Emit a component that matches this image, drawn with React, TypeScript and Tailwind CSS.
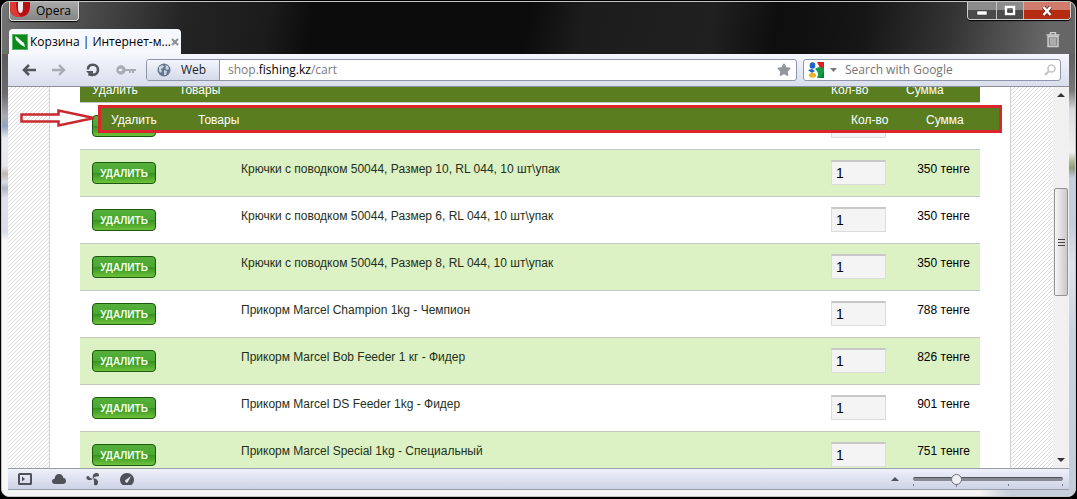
import React from "react";
import { Star } from "lucide-react";

interface CartItem {
  id: number;
  name: string;
  price: number;
}

const items: CartItem[] = [
  { id: 1, name: "", price: 0 },
  { id: 2, name: "Крючки с поводком 50044, Размер 10, RL 044, 10 шт\\упак", price: 350 },
  { id: 3, name: "Крючки с поводком 50044, Размер 6, RL 044, 10 шт\\упак", price: 350 },
  { id: 4, name: "Крючки с поводком 50044, Размер 8, RL 044, 10 шт\\упак", price: 350 },
  { id: 5, name: "Прикорм Marcel Champion 1kg - Чемпион", price: 788 },
  { id: 6, name: "Прикорм Marcel Bob Feeder 1 кг - Фидер", price: 826 },
  { id: 7, name: "Прикорм Marcel DS Feeder 1kg - Фидер", price: 901 },
  { id: 8, name: "Прикорм Marcel Special 1kg - Специальный", price: 751 },
];

const hatch =
  "bg-[linear-gradient(135deg,#fff_40%,#dcdcdc_40%,#dcdcdc_50%,#fff_50%,#fff_90%,#dcdcdc_90%)] bg-[length:4px_4px]";

const OperaLogo = () => (
  <svg className="w-5 h-4" viewBox="0 0 20 16">
    <path d="M0 0h20v4c0 7-4 11-10 11C5 15 1 13 0 8z" fill="#b90f14" />
    <path d="M0 0h6c0 7 1 13 6 14.500C5 16 1 13 0 8z" fill="#de3a35" />
    <path d="M8 0h5v6c0 3-1 5-2.500 5S8 9 8 6z" fill="#eceaea" />
  </svg>
);

const TitleBar = () => (
  <header className="flex h-[52px] justify-between pl-[7px] bg-[linear-gradient(100deg,#747474_0%,#4c4c4c_8%,#242424_17%,#1b1b1b_25%,#0c0c0c_29%,#0c0c0c_49%,#1c1c1c_54%,#202020_66%,#0e0e0e_72%,#161616_80%,#333_88%,#666_97%)]">
    <div className="flex flex-col justify-between">
      <button className="flex items-start h-[19px] w-[70px] rounded-b-[4px] border border-t-0 border-[#ddd] bg-linear-to-b from-[#a9a9a9] to-[#858585] shadow-[0_1px_1px_#000] text-[12px] leading-[18px] text-black">
        <OperaLogo />
        <span className="pl-1.5">Opera</span>
      </button>
      <div className="flex items-center h-[25px] w-[172px] rounded-t-[4px] bg-[#f7f8fd] px-[3px]">
        <svg className="w-4 h-4 shrink-0" viewBox="0 0 16 16">
          <rect width="16" height="16" fill="#0c8a1c" />
          <rect x=".5" y=".5" width="15" height="15" fill="none" stroke="#5cb567" />
          <path d="M3 2.500l2 .5 5 4.500 2 1.500 1 4-3-1.500-2-1.500L4 6z" fill="#fff" />
        </svg>
        <span className="pl-0.5 text-[12px] leading-4 text-black whitespace-nowrap">Корзина | Интернет-м...</span>
        <button aria-label="Close tab" className="ml-auto mr-1 text-[#8d8f93]">
          <svg className="w-2 h-2" viewBox="0 0 8 8" stroke="currentColor" strokeWidth="2">
            <path d="M1 1l6 6M7 1L1 7" />
          </svg>
        </button>
      </div>
    </div>
    <div className="flex flex-col items-end pr-1">
      <div className="flex h-[18px] rounded-b-[4px] border border-t-0 border-[#d0d0d0] overflow-hidden shadow-[0_1px_1px_#000]">
        <button aria-label="Minimize" className="flex w-7 items-center justify-center bg-linear-to-b from-[#8b8b8b] from-50% to-[#4a4a4a] to-50%">
          <svg className="w-3 h-3" viewBox="0 0 12 12"><rect x="1" y="6" width="10" height="4" fill="#fff" stroke="#444" strokeWidth=".6" /></svg>
        </button>
        <button aria-label="Maximize" className="flex w-[27px] items-center justify-center border-l border-[#c4c4c4] bg-linear-to-b from-[#8b8b8b] from-50% to-[#4a4a4a] to-50%">
          <svg className="w-3 h-3" viewBox="0 0 12 12" fill="none"><rect x="2" y="2" width="8" height="7" stroke="#fff" strokeWidth="2.400" /><rect x="4" y="4" width="4" height="3" stroke="#444" strokeWidth=".8" /></svg>
        </button>
        <button aria-label="Close" className="flex w-[47px] items-center justify-center border-l border-[#d9b1a8] bg-linear-to-b from-[#d07b6b] from-50% to-[#b52c12] to-50%">
          <svg className="w-3 h-3" viewBox="0 0 12 12"><path d="M2.500 2l7 8M9.500 2l-7 8" stroke="#5a2018" strokeWidth="4" /><path d="M2.500 2l7 8M9.500 2l-7 8" stroke="#fff" strokeWidth="2.600" /></svg>
        </button>
      </div>
      <button aria-label="Closed tabs" className="mt-3 mr-[11px]">
        <svg className="w-3.5 h-4" viewBox="0 0 14 16" fill="none" stroke="#cfcfcf">
          <path d="M2 4.500h10v10H2z" fill="#8a8a8a" strokeWidth="1.400" />
          <path d="M.5 3h13M4.500 2.500v-2h5v2" strokeWidth="1.400" />
          <path d="M5 6v7M7 6v7M9 6v7" strokeWidth="1" />
        </svg>
      </button>
    </div>
  </header>
);

const Toolbar = () => (
  <div className="flex shrink-0 items-center h-[33px] pl-3.5 pr-2 border-b border-[#8d919e] bg-linear-to-b from-[#f5f7fd] to-[#d9deec]">
    <div className="flex items-center gap-4 text-[#53565c]">
      <button aria-label="Back">
        <svg className="w-3.5 h-3" viewBox="0 0 14 12" fill="none" stroke="currentColor" strokeWidth="2.600"><path d="M7 1L2 6l5 5M2 6h12" /></svg>
      </button>
      <button aria-label="Forward" className="text-[#a9acb3]">
        <svg className="w-3.5 h-3" viewBox="0 0 14 12" fill="none" stroke="currentColor" strokeWidth="2.400"><path d="M7 1l5 5-5 5M12 6H0" /></svg>
      </button>
      <button aria-label="Reload" className="ml-1">
        <svg className="w-3.5 h-3.5" viewBox="0 0 14 14" fill="none" stroke="currentColor" strokeWidth="2.600"><path d="M2 6.500V6C2 3.300 4.200 1.800 7 1.800s5 2.200 5 5-2 5-5 5H6" /><path d="M2 12.500l.5-2L0 8h7v5.500z" fill="currentColor" stroke="none" /></svg>
      </button>
      <button aria-label="Wand" className="text-[#a9acb3]">
        <svg className="w-5 h-2.5" viewBox="0 0 20 10" fill="none" stroke="currentColor"><path d="M8 5h12M14 5v3M17 5v3" strokeWidth="2" /><circle cx="5" cy="5" r="3" strokeWidth="3.500" /><circle cx="4" cy="5" r="1.300" fill="#eceff8" stroke="none" /></svg>
      </button>
    </div>
    <div className="flex flex-1 ml-2.5 h-[22px] items-stretch rounded-[3px] border border-[#8f95a8] bg-white overflow-hidden">
      <button className="flex items-center w-[73px] shrink-0 pl-2.5 border-r border-[#8f95a8] bg-linear-to-b from-[#f3f5fb] to-[#d4daea] text-[12px] text-[#222]">
        <svg className="w-3.5 h-3.5" viewBox="0 0 14 14">
          <circle cx="7" cy="7" r="6.500" fill="#66758c" />
          <path d="M2 4l3-2 2 1-1 2-2 1 1 2-1 2-2-2zM8 2l3 1 1 3-2 1-2-2 1-1zM7 7l3 1-1 4-2 0z" fill="#c8d3e2" />
        </svg>
        <span className="pl-2.5">Web</span>
      </button>
      <label className="relative flex flex-1 items-center pl-2 text-[12px] text-[#7c7c7c]">
        <span>shop.<span className="text-black">fishing.kz</span>/cart</span>
        <input type="text" aria-label="Address" className="absolute inset-0 bg-transparent outline-none pl-2" />
      </label>
      <button aria-label="Bookmark" className="px-[5px] text-[#93969c]">
        <Star className="w-3.5 h-3.5" fill="currentColor" />
      </button>
    </div>
    <div className="flex w-[258px] ml-1.5 h-[22px] items-center rounded-[3px] border border-[#8f95a8] bg-white px-1">
      <button aria-label="Search engine" className="flex items-center gap-1.5">
        <svg className="w-4 h-4" viewBox="0 0 16 16">
          <path d="M9 0h7v6h-4z" fill="#d8201c" />
          <path d="M7 7c2-2 5-2 9-1v10H9c2-4 1-6-2-9z" fill="#139a44" />
          <path d="M16 10v6h-4z" fill="#0b7a35" />
          <ellipse cx="4.500" cy="3.500" rx="2.800" ry="3.300" fill="#1d62c4" />
          <path d="M0 8l4-1 3 2-3 2z" fill="#1d62c4" />
          <ellipse cx="4.500" cy="13.300" rx="3.500" ry="2.500" fill="#eeb229" />
        </svg>
        <svg className="w-[7px] h-1" viewBox="0 0 7 4"><path d="M0 0h7L3.500 4z" fill="#777" /></svg>
      </button>
      <input type="search" aria-label="Search" placeholder="Search with Google" className="flex-1 min-w-0 pl-2 text-[12px] outline-none placeholder:text-[#757575] placeholder:opacity-100" />
      <svg className="w-3 h-3" viewBox="0 0 12 12" fill="none" stroke="#c6c6c6"><circle cx="7.500" cy="4.500" r="3.500" strokeWidth="1.600" /><path d="M5 7L1 11" strokeWidth="2.400" /></svg>
    </div>
  </div>
);

const CartRow: React.FC<{ item: CartItem; striped: boolean }> = ({ item, striped }) => (
  <tr className={`h-[47px] align-top border-b border-[#c4c8c0] ${striped ? "bg-[#dcf1c4]" : "bg-white"}`}>
    <td className="pl-3 pt-3">
      <button
        aria-label="Удалить"
        className="block h-[22px] w-16 rounded-[4px] border border-[#1d5a10] bg-[linear-gradient(#55b03b,#4aa832_50%,#35911f_50%,#6ec23c)] text-[10px] leading-[22px] font-bold text-[#f2ffe8]"
      >
        {item.name && "УДАЛИТЬ"}
      </button>
    </td>
    <td className="pl-[74px] pt-[11px]">
      {item.name && <a href="#item" className="text-[#24301a]">{item.name}</a>}
    </td>
    <td className="pl-3 pt-2.5">
      <input
        type="text"
        aria-label="Кол-во"
        defaultValue={1}
        className="block h-[25px] w-[55px] border border-t-2 border-[#dcdcdc] border-t-[#c8c8c8] bg-[#f4f4f4] pl-1 text-[14px] text-black"
      />
    </td>
    <td className="pr-2.5 pt-[11px] text-right text-black">{item.name && `${item.price} тенге`}</td>
  </tr>
);

const CartTable = () => (
  <table className="-mt-[9px] w-full table-fixed border-collapse text-[12px] leading-4">
    <colgroup>
      <col className="w-[87px]" />
      <col />
      <col className="w-[85px]" />
      <col className="w-[76px]" />
    </colgroup>
    <thead>
      <tr className="h-6 bg-[#597d1f] text-left text-white border-b border-[#c4c8c0]">
        <th className="pl-3 font-normal">Удалить</th>
        <th className="pl-3 font-normal">Товары</th>
        <th className="pl-3 font-normal">Кол-во</th>
        <th className="pl-0.5 font-normal">Сумма</th>
      </tr>
    </thead>
    <tbody>
      {items.map((item, i) => (
        <CartRow key={item.id} item={item} striped={i % 2 === 1} />
      ))}
    </tbody>
  </table>
);

const FloatingHeader = () => (
  <div className="absolute top-[18px] left-[90px] right-[67px] flex h-7 items-center border-[3px] border-[#d9252b] bg-[#597d1f] pl-2.5 pt-0.5 text-[12px] text-white">
    <span className="w-[87px]">Удалить</span>
    <span className="flex-1">Товары</span>
    <span className="w-[75px]">Кол-во</span>
    <span className="w-[73px]">Сумма</span>
  </div>
);

const Arrow = () => (
  <svg className="absolute top-[21px] left-3 w-[78px] h-[20px]" viewBox="0 0 78 20" fill="none" stroke="#c9282d" strokeWidth="2.500">
    <path d="M1.500 6.500h37V2.500L74 10 38.500 17.500v-4H1.500z" />
  </svg>
);

const ScrollBar = () => (
  <div className="flex w-4 shrink-0 flex-col items-center bg-[#f0f0f0]">
    <svg className="mt-1.5 w-2 h-1" viewBox="0 0 8 4"><path d="M0 4L4 0l4 4z" fill="#333" /></svg>
    <div className="flex-[91]" />
    <div className="flex h-[108px] w-3.5 items-center justify-center rounded-[2px] border border-[#939393] bg-linear-to-r from-[#f6f6f6] to-[#c9c9cc]">
      <div className="flex w-[7px] flex-col gap-0.5">
        <span className="h-px bg-[#444]" />
        <span className="h-px bg-[#444]" />
        <span className="h-px bg-[#444]" />
      </div>
    </div>
    <div className="flex-[161]" />
    <svg className="mb-1.5 w-2 h-1" viewBox="0 0 8 4"><path d="M0 0h8L4 4z" fill="#333" /></svg>
  </div>
);

const StatusBar = () => (
  <footer className="flex h-[22px] shrink-0 items-center justify-between border-y border-[#999da8] bg-linear-to-b from-[#eff1fa] to-[#cdd3e6] pl-2.5 pr-1.5 text-[#4f5259]">
    <div className="flex items-center gap-5">
      <button aria-label="Panels">
        <svg className="w-3.5 h-3" viewBox="0 0 14 12"><rect x="1" y="1" width="12" height="10" rx=".5" fill="none" stroke="currentColor" strokeWidth="2" /><path d="M4 3.500L7 6 4 8.500z" fill="currentColor" /></svg>
      </button>
      <button aria-label="Link">
        <svg className="w-3.5 h-2.5" viewBox="0 0 14 10"><path d="M3 10C1 10 0 8.800 0 7.300S1 5 2.600 4.800C2.800 2 4.500 0 7 0c2.400 0 4 1.600 4.200 3.800C13 4 14 5.300 14 7s-1.200 3-3 3z" fill="currentColor" /></svg>
      </button>
      <button aria-label="Unite">
        <svg className="w-3.5 h-3.5" viewBox="0 0 14 14" fill="currentColor"><path d="M7 6.500C6 3 8 .500 11.500 1c2 1 2 3 .500 3.500C10.500 4.600 8.500 4.500 7 6.500zM7 6.500C5 9 1.500 8.500 .500 6.500 0 4.500 1.500 3.500 3 4.500c.500 1.500 2 2 4 2zM7 6.500c3-.500 5.500 1.500 5 4.500-.500 2.500-3 3-4 1.500 0-2 .500-4-1-6z" /></svg>
      </button>
      <button aria-label="Turbo">
        <svg className="w-3.5 h-3" viewBox="0 0 14 12"><path d="M2.500 12A7 6.800 0 1 1 11.500 12z" fill="currentColor" /><path d="M11 3L8.300 8.200a1.600 1.600 0 1 1-2-1.700z" fill="#e1e5f1" /></svg>
      </button>
    </div>
    <div className="flex items-center gap-3.5">
      <button aria-label="View">
        <svg className="w-2 h-1" viewBox="0 0 8 4"><path d="M0 4L4 0l4 4z" fill="currentColor" /></svg>
      </button>
      <div className="relative flex h-5 w-[150px] items-center">
        <input
          type="range"
          aria-label="Zoom"
          min={0}
          max={100}
          defaultValue={27}
          className="w-full h-1 appearance-none rounded-full border-t border-[#50535b] bg-[#868a93] [&::-webkit-slider-thumb]:appearance-none [&::-webkit-slider-thumb]:h-[11px] [&::-webkit-slider-thumb]:w-[11px] [&::-webkit-slider-thumb]:rounded-full [&::-webkit-slider-thumb]:border [&::-webkit-slider-thumb]:border-[#6c7079] [&::-webkit-slider-thumb]:bg-[#eef0f5]"
        />
        <svg className="absolute bottom-0.5 left-0 w-full h-1" viewBox="0 0 150 4" stroke="#777b86">
          <path d="M.5 1v2M43.500 1v3M95.500 1v2M149.500 1v2" />
        </svg>
      </div>
    </div>
  </footer>
);

export default function App() {
  return (
    <div className="h-screen bg-black pl-px pr-px pt-px pb-0.5 font-['Open_Sans','Liberation_Sans',sans-serif]">
      <div className="flex h-full flex-col overflow-hidden rounded-lg border border-[#c4c4c4] bg-[#f1f2f4]">
        <TitleBar />
        <div className="flex min-h-0 flex-1">
          <div className="w-1.5 bg-[linear-gradient(#5c5a5b_0,#6e6a6e_40px,#a9abb5_62px,#8fa2c2_72px,#e9ecf2_84px,#e8e8ec_112px,#c0b5b2_120px,#dadde6_128px,#b0b5c4_134px,#dde2ec_144px,#d8dde9_178px,#f7f7f8_186px)]" />
          <div className="flex min-w-0 flex-1 flex-col">
            <Toolbar />
            <div className="relative flex min-h-0 flex-1 overflow-hidden font-['Liberation_Sans',Arial,sans-serif]">
              <div className={`w-[42px] shrink-0 border-r border-[#d4d4d4] ${hatch}`} />
              <main className="min-w-0 flex-1 bg-white px-[30px]">
                <CartTable />
              </main>
              <div className={`w-[43px] shrink-0 border-l border-[#d4d4d4] ${hatch}`} />
              <ScrollBar />
              <FloatingHeader />
              <Arrow />
            </div>
            <StatusBar />
          </div>
          <div className="w-1.5 bg-[linear-gradient(#606060_0,#777_36px,#d9dbe0_56px,#f0f0f0_98px,#a9b78f_108px,#8f9a80_114px,#c4cede_124px,#c3cddc_170px,#dde3ec_210px,#c9d3e0_280px,#c3ccd9_100%)]" />
        </div>
        <div className="h-1.5 shrink-0 bg-[linear-gradient(90deg,#f4f4f5_0,#f4f4f5_91%,#c6cfdc_94%)]" />
      </div>
    </div>
  );
}
